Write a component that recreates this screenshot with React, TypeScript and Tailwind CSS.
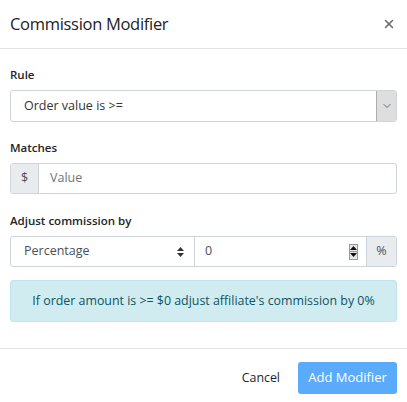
import { X, ChevronDown } from 'lucide-react';

const font = { fontFamily: '"Open Sans", "Noto Sans", sans-serif' };

function Label({ children }: { children: string }) {
  return <div className="text-[11.5px] font-semibold text-[#212529] mb-[7px] leading-[16px]">{children}</div>;
}

export default function App() {
  return (
    <div className="w-[407px] h-[402px] bg-white text-[#212529]" style={font}>
      <div className="flex items-center justify-between h-[49px] px-[10px] border-b border-[#e3e3e3]">
        <h2 className="text-[16.5px] leading-none text-[#222] tracking-[-0.3px] pt-[1px]">Commission Modifier</h2>
        <X className="w-[14px] h-[14px] text-[#6b6b6b] mr-[1px]" strokeWidth={2.6} />
      </div>

      <div className="px-[10px] pt-[18px]">
        <Label>Rule</Label>
        <div className="flex h-[32px] border border-[#ced4da] rounded-[3px] overflow-hidden">
          <div className="flex-1 flex items-center pl-[13px] text-[12.5px] text-[#333]">Order value is &gt;=</div>
          <div className="w-[20px] flex items-center justify-center bg-[#dedede] border-l border-[#adadad]">
            <ChevronDown className="w-[12px] h-[12px] text-[#444]" strokeWidth={1.5} />
          </div>
        </div>

        <div className="mt-[18px]">
          <Label>Matches</Label>
          <div className="flex h-[31px] border border-[#ced4da] rounded-[3px] overflow-hidden">
            <div className="w-[28px] flex items-center justify-center bg-[#e9ecef] border-r border-[#ced4da] text-[12.5px] text-[#495057]">$</div>
            <div className="flex-1 flex items-center pl-[11px] text-[12.5px] text-[#6c757d]">Value</div>
          </div>
        </div>

        <div className="mt-[19px]">
          <Label>Adjust commission by</Label>
          <div className="flex h-[31px] border border-[#ced4da] rounded-[3px] overflow-hidden">
            <div className="w-[184px] flex items-center justify-between pl-[13px] pr-[10px] text-[12.5px] text-[#495057] border-r border-[#ced4da]">
              <span>Percentage</span>
              <svg width="7" height="10" viewBox="0 0 7 10" fill="#333">
                <path d="M3.5 0 L7 4 H0 Z" />
                <path d="M0 6 H7 L3.5 10 Z" />
              </svg>
            </div>
            <div className="flex-1 flex items-center justify-between pl-[10px] pr-[8px] text-[12.5px] text-[#495057]">
              <span>0</span>
              <div className="flex flex-col w-[9px] h-[16px] border border-[#999] bg-[#e6e6e6]">
                <div className="flex-1 flex items-center justify-center border-b border-[#999]">
                  <svg width="7" height="4" viewBox="0 0 7 4" fill="#111"><path d="M3.5 0 L7 4 H0 Z" /></svg>
                </div>
                <div className="flex-1 flex items-center justify-center">
                  <svg width="7" height="4" viewBox="0 0 7 4" fill="#111"><path d="M0 0 H7 L3.5 4 Z" /></svg>
                </div>
              </div>
            </div>
            <div className="w-[30px] flex items-center justify-center bg-[#e9ecef] border-l border-[#ced4da] text-[12.5px] text-[#495057]">%</div>
          </div>
        </div>

        <div className="mt-[13px] h-[42px] flex items-center justify-center bg-[#d1ecf1] border border-[#bee5eb] rounded-[3px] text-[12.4px] text-[#0c5460]">
          If order amount is &gt;= $0 adjust affiliate's commission by 0%
        </div>
      </div>

      <div className="mt-[26px] border-t border-[#e3e3e3] flex items-center justify-end gap-[18px] px-[10px] pt-[13px]">
        <span className="text-[12.4px] text-[#212529]">Cancel</span>
        <div className="w-[99px] h-[32px] flex items-center justify-center rounded-[3px] bg-[#5aabfc] text-white text-[13px]">Add Modifier</div>
      </div>
    </div>
  );
}
